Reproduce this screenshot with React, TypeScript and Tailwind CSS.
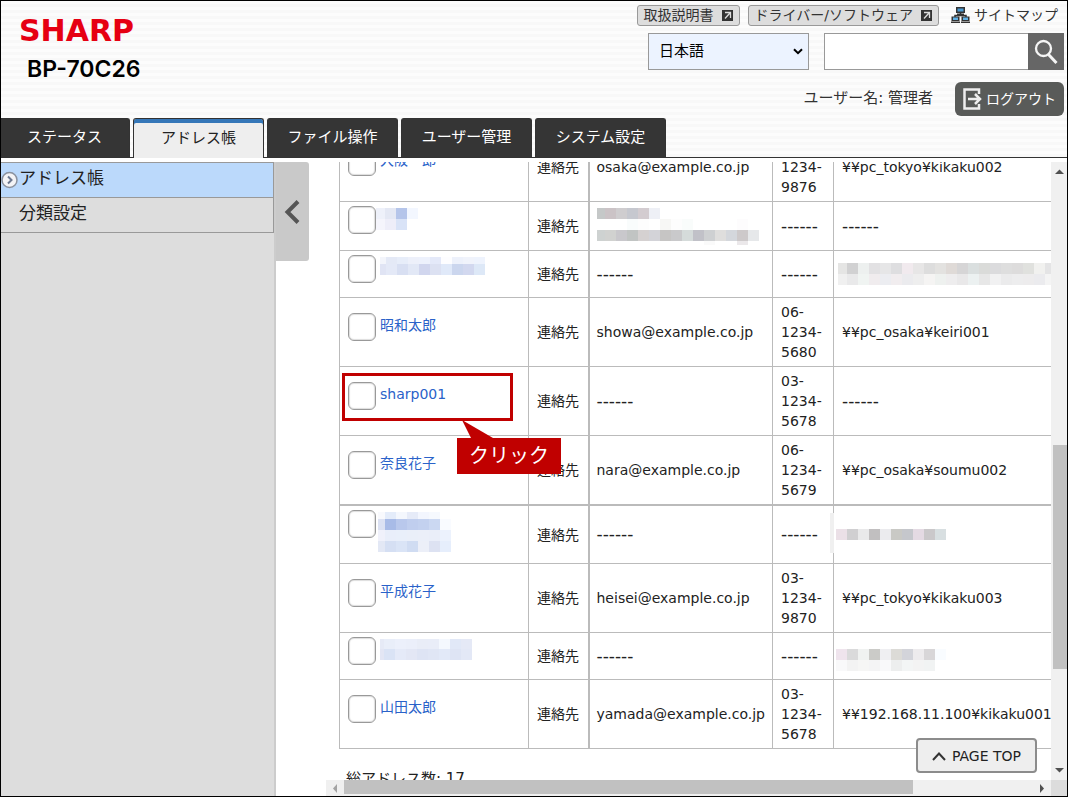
import { useState } from 'react'
import type { ReactNode } from 'react'
import clsx from 'clsx'

type MosaicData = {
  first: number
  heights: number[]
  rows: string[]
}

type Contact = {
  id: string
  name: ReactNode
  mail?: ReactNode
  tel?: string[]
  folder?: ReactNode
  tall?: boolean
  thick?: boolean
  callout?: boolean
}

const CELL = 11

// Colours are listed left to right, "-" leaves a cell empty.
const mosaics: Record<string, MosaicData> = {
  name1: {
    first: 9,
    heights: [11, 11],
    rows: ['eef1fa e4e8f4 b5c5ea f3f7ff', 'f5f5fc eeeef9 d9e3f7 -'],
  },
  mail1: {
    first: 8,
    heights: [11, 11, 11, 4],
    rows: [
      'c5c8c8 cbc3c6 cfcdcf c6c8cf d3ccd0 eef0f6',
      '- - - f9fcfc fdfdfd - f7f7f5 fdfdfd f9fcfb - - - - fdfcfd',
      'ced2d1 d1d2d0 c9c8cc c1c4c3 d5d1d1 d3d3d8 c6c5c4 c9c9cb d5dbda c1c1c8 ced0d2 dfdedd d4d7dc cdc9ca e6e8ea',
      '- - - - - - - - - - fafafa - - ebe8ea -',
    ],
  },
  name2: {
    first: 6,
    heights: [7, 11],
    rows: [
      'f3f5fb e4e9f6 e7edf9 edf0fa edf1fc e4e9f9 fdfdff edf1fb f0f3fb eef3fd',
      'e0e4f4 e4e9f7 d8dff2 e2e8f6 d1d6ee dce1f2 e0e9f9 cbd6ee d2d8ef dde8f7',
    ],
  },
  folder2: {
    first: 9,
    heights: [11, 11],
    rows: [
      'e5e5e4 d1d1d2 edf0ef e2e1e3 e6e6e7 dedee0 f1eaee e7e6e6 dddddd e3e2e0 dfdad7 d6d5d6 dadfdf dadbd9 dbdbdd dedede dddcdc e0e1de f1f1ef e4e4e5',
      'f0f0f0 e9e9ea f0f4f2 f0ecee ecedf1 f1edef ebebee eeeeee f5f4f3 eef1ef eeedee e9e8e9 ecf1f1 e7e7e7 f1f1f2 ebebec ededee edeced ebebee f4f4f4',
    ],
  },
  name6: {
    first: 7,
    heights: [7, 11, 11, 11],
    rows: [
      'f8f9fd e4ecfa f4f7fd e6ebf8 f3f6fe f6f9fe -',
      'dbe1f3 a8bbe7 b9c8ec c0ceee c3d1ef cbd8f2 f9fbff',
      'f0f1fb e9eefa e9effa eaeff9 ebeff9 eaeef9 ecf2fd',
      'e3e8f5 d5dff3 dae4f6 d0dcf2 eceff8 dde2f2 e6eefc',
    ],
  },
  folder6: {
    first: 11,
    heights: [11],
    rows: ['ebe0e7 d0cfd1 e9e9ea c1bfc0 ebebee c9c9c5 c5c7cc e4dae3 cac8ca d8dfe1'],
  },
  name8: {
    first: 4,
    heights: [10, 11],
    rows: [
      'e6eaf6 e9eef9 ecf0fb ebeffa e9edf7 e9edf8 f4f8fe e1e8f7 e5e9f6',
      'e3e6f4 dae3f5 e5eaf8 e3e7f5 dee4f4 e0e6f5 e2e9f8 dee4f4 e3e8f6',
    ],
  },
  folder8: {
    first: 11,
    heights: [11, 11],
    rows: [
      'efe4ed dadadb f0f2f1 cbcbc8 efeff2 dcdbd7 d3d4da edebed d8d6d8 f9fcff',
      'f9f9fa f3f3f3 f6f6f5 f4f4f5 f9f9fa edeeee f3f5f5 f3f3f3 f1f3f3 -',
    ],
  },
}

function Mosaic({ id, className }: { id: string; className?: string }) {
  const { first, heights, rows } = mosaics[id]
  const cells = rows.map((r) => r.split(' '))
  const cols = Math.max(...cells.map((r) => r.length))
  const width = first + (cols - 1) * CELL
  const height = heights.reduce((a, b) => a + b, 0)
  let y = 0

  return (
    <svg
      width={width}
      height={height}
      shapeRendering="crispEdges"
      className={clsx('block shrink-0 max-w-none', className)}
    >
      {cells.map((row, r) => {
        const top = y
        y += heights[r]
        return row.map((c, i) =>
          c === '-' ? null : (
            <rect
              key={`${r}-${i}`}
              x={i === 0 ? 0 : first + (i - 1) * CELL}
              y={top}
              width={i === 0 ? first : CELL}
              height={heights[r]}
              fill={`#${c}`}
            />
          ),
        )
      })}
    </svg>
  )
}

const contacts: Contact[] = [
  {
    id: 'osaka',
    name: '大阪一郎',
    mail: 'osaka@example.co.jp',
    tel: ['06-', '1234-', '9876'],
    folder: '¥¥pc_tokyo¥kikaku002',
  },
  { id: 'c1', name: <Mosaic id="name1" className="-ml-1" />, mail: <Mosaic id="mail1" />, tall: true },
  {
    id: 'c2',
    name: <Mosaic id="name2" />,
    folder: <Mosaic id="folder2" className="-ml-1" />,
  },
  {
    id: 'showa',
    name: '昭和太郎',
    mail: 'showa@example.co.jp',
    tel: ['06-', '1234-', '5680'],
    folder: '¥¥pc_osaka¥keiri001',
  },
  { id: 'sharp', name: 'sharp001', tel: ['03-', '1234-', '5678'], callout: true },
  {
    id: 'nara',
    name: '奈良花子',
    mail: 'nara@example.co.jp',
    tel: ['06-', '1234-', '5679'],
    folder: '¥¥pc_osaka¥soumu002',
    thick: true,
  },
  {
    id: 'c6',
    name: <Mosaic id="name6" className="mb-[7px] -ml-0.5" />,
    folder: (
      <div className="relative">
        <span className="absolute -top-4 -left-3 h-10 w-1 bg-[#f0f0f0]" />
        <Mosaic id="folder6" className="-ml-1.5" />
      </div>
    ),
  },
  {
    id: 'heisei',
    name: '平成花子',
    mail: 'heisei@example.co.jp',
    tel: ['03-', '1234-', '9870'],
    folder: '¥¥pc_tokyo¥kikaku003',
  },
  {
    id: 'c8',
    name: <Mosaic id="name8" />,
    folder: <Mosaic id="folder8" className="mt-2 -ml-1.5" />,
  },
  {
    id: 'yamada',
    name: '山田太郎',
    mail: 'yamada@example.co.jp',
    tel: ['03-', '1234-', '5678'],
    folder: '¥¥192.168.11.100¥kikaku001',
  },
]

const tabs = ['ステータス', 'アドレス帳', 'ファイル操作', 'ユーザー管理', 'システム設定']

function PopupIcon() {
  return (
    <svg width="11" height="11" viewBox="0 0 11 11">
      <rect width="11" height="11" fill="#333" />
      <path d="M3 2.500h5.500v5.500M8 3L3 8.500" fill="none" stroke="#ddd" strokeWidth="1.300" />
    </svg>
  )
}

function SitemapIcon() {
  return (
    <svg width="19" height="16" viewBox="0 0 19 16">
      <path d="M9.500 6v3M4 10V8.500h11V10" fill="none" stroke="#333" strokeWidth="1.500" />
      <path d="M5 0h9v6H5zM6 6.500h7v1.500H6z" fill="#333" />
      <path d="M6.500 1.500h6v3h-6z" fill="#4a9bd4" />
      <path d="M0.500 9.500h8v4.500h-8zM0 14.500h9V16H0z" fill="#333" />
      <path d="M2 10.500h5V13H2z" fill="#5fb0e6" />
      <path d="M10.500 9.500h8v4.500h-8zM10 14.500h9V16h-9z" fill="#333" />
      <path d="M12 10.500h5V13h-5z" fill="#5fb0e6" />
    </svg>
  )
}

function Header() {
  const [lang, setLang] = useState('ja')

  return (
    <header className="flex justify-between items-start h-[117px] pr-[3px]">
      <div className="pl-[18px] pt-4">
        <div className="text-3xl leading-7 font-bold text-[#e60012]">SHARP</div>
        <h1 className="pl-2 pt-2.5 font-['Inter'] text-[23px] leading-7 font-semibold text-black">BP-70C26</h1>
      </div>

      <div className="flex flex-col items-end pt-[3px] text-[#333]">
        <div className="flex items-center h-[22px] gap-2 pr-1.5">
          <button className="flex items-center gap-2 h-[21px] px-1.5 rounded-[3px] border border-[#999] bg-[#ddd]">
            取扱説明書
            <PopupIcon />
          </button>
          <button className="flex items-center gap-2 h-[21px] px-1.5 rounded-[3px] border border-[#999] bg-[#ddd]">
            ドライバー/ソフトウェア
            <PopupIcon />
          </button>
          <a href="#sitemap" className="flex items-center gap-1 pl-1">
            <SitemapIcon />
            サイトマップ
          </a>
        </div>

        <div className="flex pt-[7px]">
          <div className="relative mr-[15px]">
            <select
              aria-label="言語"
              value={lang}
              onChange={(e) => setLang(e.target.value)}
              className="appearance-none block w-[161px] h-[37px] pl-2.5 border border-[#999] bg-[#ecf3ff] text-[15px] text-black"
            >
              <option value="ja">日本語</option>
              <option value="en">English</option>
            </select>
            <svg width="10" height="7" viewBox="0 0 10 7" className="absolute right-1.5 top-[15px] pointer-events-none">
              <path d="M1 1.200L5 5.200L9 1.200" fill="none" stroke="#000" strokeWidth="2" />
            </svg>
          </div>
          <input
            type="text"
            aria-label="検索"
            className="w-[204px] h-[37px] px-2 border border-r-0 border-[#999] bg-white"
          />
          <button aria-label="検索する" className="flex items-center justify-center w-9 h-[37px] bg-[#666]">
            <svg width="24" height="26" viewBox="0 0 24 26" fill="none" stroke="#f5f5f5">
              <circle cx="9.500" cy="9.500" r="7.500" strokeWidth="2.300" />
              <path d="M14.500 15.500l8 8.500" strokeWidth="3" />
            </svg>
          </button>
        </div>

        <div className="flex items-center gap-[22px] pt-3">
          <span className="text-[15px]">ユーザー名: 管理者</span>
          <button className="flex items-center gap-1 h-[34px] px-2 rounded-md bg-[#595b59] text-white">
            <svg width="19" height="22" viewBox="0 0 19 22" fill="none" stroke="#eee">
              <path d="M16 6V1.500H1.500v19H16V16" strokeWidth="2.500" />
              <path d="M5 11h12M12 6l5 5l-5 5" strokeWidth="2.500" />
            </svg>
            ログアウト
          </button>
        </div>
      </div>
    </header>
  )
}

function Tabs({ active, onSelect }: { active: number; onSelect: (i: number) => void }) {
  return (
    <nav className="flex gap-[3px] h-10 -ml-0.5 border-b border-[#333] text-[15px]">
      {tabs.map((t, i) => (
        <button
          key={t}
          onClick={() => onSelect(i)}
          className={clsx(
            'w-[131px] rounded-t-[3px] border border-b-0 border-[#333]',
            i === active
              ? 'h-10 bg-[#eee] text-[#222] shadow-[inset_0_4px_0_#3577b8]'
              : 'h-[39px] bg-[#353535] text-white',
          )}
        >
          {t}
        </button>
      ))}
    </nav>
  )
}

function Sidebar() {
  return (
    <aside className="flex shrink-0">
      <div className="w-[275px] bg-[#ddd] border-r-2 border-[#ccc]">
        <a
          href="#address"
          className="flex items-center h-9 border-y border-r border-[#999] bg-[#bbd9fb] text-[17px] text-[#222]"
        >
          <svg width="18" height="18" viewBox="0 0 18 18" fill="none">
            <circle cx="8.500" cy="9" r="7.500" fill="#f4f4f6" stroke="#8a919e" strokeWidth="1.500" />
            <path d="M7 5.500l3.500 3.500L7 12.500" stroke="#6c7890" strokeWidth="2" />
          </svg>
          <span className="pb-1">アドレス帳</span>
        </a>
        <a
          href="#category"
          className="flex items-center h-[35px] pl-[18px] pb-1 border-b border-r border-[#999] text-[17px] text-[#222]"
        >
          分類設定
        </a>
      </div>
      <button
        aria-label="メニューを閉じる"
        className="flex items-center justify-center w-[33px] h-[99px] pr-0.5 rounded-r-[3px] bg-[#c9c9c9]"
      >
        <svg width="16" height="24" viewBox="0 0 16 24" fill="none">
          <path d="M14 1.500L3.500 12L14 22.500" stroke="#555" strokeWidth="4" />
        </svg>
      </button>
    </aside>
  )
}

function Callout() {
  return (
    <>
      <div className="absolute left-0.5 top-1.5 w-[171px] h-12 border-[3px] border-[#c00000] pointer-events-none" />
      <div className="absolute left-[117px] top-[53px] z-10 pointer-events-none">
        <svg width="40" height="18" viewBox="0 0 40 18" className="block">
          <path d="M5 0L36 18H14z" fill="#c00000" />
        </svg>
        <div className="px-3 h-9 bg-[#c00000] text-xl leading-9 text-white whitespace-nowrap">クリック</div>
      </div>
    </>
  )
}

const none = <span className="text-[17px]">------</span>

function ContactTable() {
  return (
    <table className="table-fixed border-collapse w-[760px] -mt-[29px] ml-[13px] leading-5 text-[#222]">
      <colgroup>
        <col className="w-[189px]" />
        <col className="w-[60px]" />
        <col className="w-[184px]" />
        <col className="w-[61px]" />
        <col />
      </colgroup>
      <tbody>
        {contacts.map((c) => (
          <tr key={c.id} className={clsx('border-[#bbb]', c.thick ? 'border-b-2' : 'border-b')}>
            <td className="relative py-1 px-2 border-x border-[#bbb]">
              <div className={clsx('flex items-start gap-1', c.tall ? 'min-h-10' : 'min-h-[38px]')}>
                <input
                  type="checkbox"
                  id={c.id}
                  aria-label={c.id}
                  className="appearance-none shrink-0 w-7 h-7 rounded-md border border-[#999] bg-white shadow-[inset_0_0_1px_1px_#ddd] checked:bg-[#3577b8]"
                />
                <label htmlFor={c.id} className="mt-0.5 text-[#2a62c9]">
                  {typeof c.name === 'string' ? <a href="#contact">{c.name}</a> : c.name}
                </label>
              </div>
              {c.callout && <Callout />}
            </td>
            <td className="px-2 border-r-2 border-[#bbb] whitespace-nowrap">連絡先</td>
            <td className="px-[7px] border-r border-[#bbb] whitespace-nowrap">{c.mail ?? none}</td>
            <td className="px-2 py-1 border-r border-[#bbb] whitespace-nowrap">
              {c.tel ? c.tel.map((line) => <div key={line}>{line}</div>) : none}
            </td>
            <td className="px-2 border-r border-[#bbb] whitespace-nowrap">{c.folder ?? none}</td>
          </tr>
        ))}
      </tbody>
    </table>
  )
}

function Arrow({ d, fill }: { d: string; fill: string }) {
  return (
    <svg width="16" height="16" viewBox="0 0 16 16" className="shrink-0">
      <path d={d} fill={fill} />
    </svg>
  )
}

export default function App() {
  const [tab, setTab] = useState(1)

  return (
    <div className="flex flex-col h-screen overflow-hidden border border-black bg-white text-sm font-['DejaVu_Sans','Noto_Sans_CJK_JP',sans-serif]">
      <div className="bg-[repeating-linear-gradient(#fcfcfc_0_3px,#f8f8f8_3px_6px)]">
        <Header />
        <Tabs active={tab} onSelect={setTab} />
      </div>

      <div className="flex flex-1 min-h-0 pt-1">
        <Sidebar />

        <main className="flex flex-col flex-1 min-w-0 pl-[17px]">
          <div className="flex flex-1 min-h-0">
            <div className="relative flex-1 min-w-0 overflow-hidden">
              <ContactTable />
              <p className="pl-5 pt-5 text-[15px] leading-5 text-[#222]">総アドレス数: 17</p>

              <button className="absolute right-3.5 bottom-[7px] flex items-center gap-1.5 h-[35px] px-3.5 rounded border-2 border-[#8c8c8c] bg-[#eee] text-[#222]">
                <svg width="14" height="10" viewBox="0 0 14 10" fill="none">
                  <path d="M1 9L7 2.500L13 9" stroke="#333" strokeWidth="2" />
                </svg>
                PAGE TOP
              </button>
            </div>

            {/* Vertical scroll bar */}
            <div className="flex flex-col w-4 bg-[#f0f0f0]">
              <Arrow d="M4 12L8.500 7.500L13 12z" fill="#505050" />
              <div className="grow-[267]" />
              <div className="grow-[224] ml-0.5 bg-[#c1c1c1]" />
              <div className="grow-[95]" />
              <Arrow d="M4 4L8.500 8.500L13 4z" fill="#505050" />
            </div>
          </div>

          {/* Horizontal scroll bar */}
          <div className="flex h-4 shrink-0 bg-[#f0f0f0]">
            <div className="flex flex-1">
              <Arrow d="M11 4L7 8.500L11 13z" fill="#a3a3a3" />
              <div className="grow-[569] ml-0.5 mb-0.5 bg-[#c1c1c1]" />
              <div className="grow-[122]" />
              <Arrow d="M5 4L9 8.500L5 13z" fill="#505050" />
            </div>
            <div className="w-4 bg-[#dcdcdc]" />
          </div>
        </main>
      </div>
    </div>
  )
}
